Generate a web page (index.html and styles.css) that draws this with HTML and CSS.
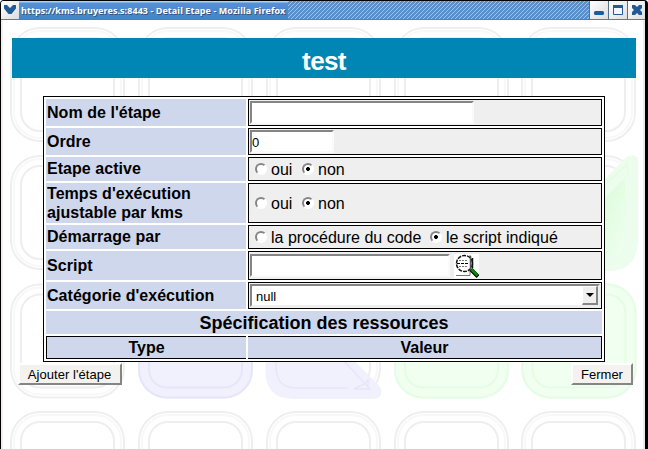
FILE: index.html
```html
<!DOCTYPE html>
<html lang="fr">
<head>
<meta charset="utf-8">
<title>Detail Etape</title>
<link rel="stylesheet" href="styles.css">
</head>
<body>
<div class="window">
  <header class="titlebar">
    <div class="wbtn menu"><svg width="14" height="10" viewBox="0 0 14 10"><path d="M1 0h3l3 3 3-3h3v3.500L8.500 9h-3L1 3.500z" fill="#215a96"/></svg></div>
    <div class="caption"><span>https://kms.bruyeres.s:8443 - Detail Etape - Mozilla Firefox</span></div>
    <div class="hatch"></div>
    <div class="wbtn"><svg width="12" height="12" viewBox="0 0 12 12"><rect x="1" y="7" width="10" height="4" rx="1.500" fill="#215a96"/></svg></div>
    <div class="wbtn"><svg width="12" height="12" viewBox="0 0 12 12"><path d="M1.500 1.500h9v9h-9z" fill="#f2f5fa" stroke="#215a96"/><path d="M1 1h10v3H1z" fill="#215a96"/></svg></div>
    <div class="wbtn"><svg width="12" height="12" viewBox="0 0 12 12"><path d="M1 1h3l2 2 2-2h3v3L9 6l2 2v3H8L6 9l-2 2H1V8l2-2-2-2z" fill="#215a96"/></svg></div>
  </header>
  <main class="page">
    <svg class="backdrop" width="641" height="429" viewBox="3 20 641 429">
      <defs>
        <linearGradient id="leaf" x1="0" y1="0" x2="1" y2="1"><stop offset="0" stop-color="#d6fad6"/><stop offset="1" stop-color="#f0fff0"/></linearGradient>
        <g id="tile" fill="none">
          <rect x="1" y="1" width="113" height="113" rx="29" stroke="#efefef" stroke-width="2"/>
          <rect x="4" y="4" width="107" height="107" rx="26" stroke="#f8f8f8" stroke-width="2"/>
          <rect x="11" y="11" width="93" height="93" rx="19" stroke="#eeeeee" stroke-width="2"/>
        </g>
        <g id="row"><use href="#tile"/><use href="#tile" x="128"/><use href="#tile" x="256"/><use href="#tile" x="384"/><use href="#tile" x="511"/></g>
        <g id="solid">
          <rect width="115" height="115" rx="29" stroke="none"/>
          <rect x="1" y="1" width="113" height="113" rx="28" fill="none"/>
          <rect x="11" y="11" width="93" height="93" rx="18" fill="none"/>
        </g>
      </defs>
      <use href="#row" x="10" y="27"/>
      <use href="#row" x="10" y="155"/>
      <use href="#row" x="10" y="283.500"/>
      <use href="#row" x="10" y="411"/>
      <g fill="#f1f1fd" stroke="#e6e6fa" stroke-width="2">
        <use href="#solid" x="138" y="283.500"/>
        <path d="M265.500 340v31q0 28 28 28h80q8-1 8-8-1-5-5-8l-43-43z" stroke="none"/>
        <path d="M276 350v20q2 17 18 18h54M344 361l26 28h-13M368 380v9h-14l10-5z" fill="none" stroke-width="1.500"/>
      </g>
      <g fill="#f0fff0" stroke="#e5fce5" stroke-width="2">
        <use href="#solid" x="394" y="283.500"/>
        <use href="#solid" x="521.500" y="283.500"/>
        <path d="M590 195l36-38q9-5 12 2v84q-2 28-30 28h-18z" stroke="none" fill="#edfded"/>
        <path d="M600 190l27-26 1 12" fill="none"/>
        <path d="M590 212l35-34v62q-2 19-20 19h-15z" fill="url(#leaf)" stroke="none"/>
      </g>
    </svg>
    <div class="content">
      <h1>test</h1>
      <form class="details">
        <div class="label">Nom de l'étape</div>
        <div class="field"><input class="name" type="text"></div>
        <div class="label">Ordre</div>
        <div class="field"><input class="order" type="text" value="0"></div>
        <div class="label raised">Etape active</div>
        <div class="field radios"><i class="radio"></i><span class="oui">oui</span><i class="radio on"></i><span>non</span></div>
        <div class="label">Temps d'exécution<br>ajustable par kms</div>
        <div class="field radios"><i class="radio"></i><span class="oui">oui</span><i class="radio on"></i><span>non</span></div>
        <div class="label raised">Démarrage par</div>
        <div class="field radios"><i class="radio"></i><span class="proc">la procédure du code</span><i class="radio on"></i><span class="indique">le script indiqué</span></div>
        <div class="label">Script</div>
        <div class="field"><input class="script" type="text"><svg class="lens" width="25" height="24" viewBox="0 0 25 24"><path fill="#fff" d="M0 0h25v24H0z"/><path d="M2 21.500h14V1" fill="none" stroke="#777"/><circle cx="10.500" cy="9.500" r="8" fill="#fff" stroke="#111" stroke-width="1.500" stroke-dasharray="4 1"/><path d="M16.500 2v14" stroke="#555" stroke-width="1.500"/><path d="M18.500 4v10" stroke="#111" stroke-width="1.500"/><path d="M5 6.500h8M5 12.500h9" stroke="#777" stroke-dasharray="2 1"/><path d="M3 9.500h12" stroke="#000" stroke-dasharray="3 1"/><path d="M17 15.500l7 7" stroke="#000" stroke-width="4"/><path d="M17.500 15.500l6 6" stroke="#078d07" stroke-width="2.600"/></svg></div>
        <div class="label">Catégorie d'exécution</div>
        <div class="field"><div class="select"><span>null</span><b class="arrow"></b></div></div>
        <div class="section"><span>Spécification des ressources</span></div>
        <div class="head type">Type</div>
        <div class="head value">Valeur</div>
      </form>
      <div class="actions"><button class="add"><span>Ajouter l'étape</span></button><button class="close"><span>Fermer</span></button></div>
    </div>
  </main>
</div>
</body>
</html>
```
FILE: styles.css
```css
* { box-sizing: border-box; }
body { margin: 0; overflow: hidden; font: 16px "Liberation Sans", sans-serif; color: #000; }
.window { width: 648px; height: 449px; border: solid #000; border-width: 1px 3px 0 1px; border-radius: 4px 4px 0 0; background: #fff; overflow: hidden; }
.titlebar { display: flex; height: 19px; margin-right: -1px; background: linear-gradient(#a9d0ff 0 1px, #5890d2 2px, #4684c8 17px); border-bottom: 1px solid #777; }
.wbtn { width: 19px; display: flex; align-items: center; justify-content: center; background: linear-gradient(135deg, #fff, #dcdcdc); border-left: 1px solid #5a6f8a; }
.wbtn.menu { width: 18px; border: 0; }
.caption { width: 269px; padding-left: 2px; font: bold 9px/19px "Open Sans", sans-serif; letter-spacing: .055px; color: #fff; text-shadow: 1px 1px #35547b; white-space: nowrap; }
.hatch { flex: 1; background: repeating-linear-gradient(135deg, #9fc2e8 0 1px, #5a8fca 1px 2.830px); }
.page { display: grid; height: 429px; width: 644px; border-left: 2px solid #f4eeee; border-right: 2px solid #eaeaea; }
.backdrop, .content { grid-area: 1 / 1; }
.content { padding: 18px 8px 0 9px; z-index: 1; }
h1 { margin: 0; width: 624px; height: 40px; background: #0086b4; color: #fff; font-size: 26px; letter-spacing: -.6px; line-height: 46px; text-align: center; }
.details { display: grid; width: 562px; margin: 18px 0 0 31px; padding: 2px; border: 1px solid #000; background: #fff; gap: 2px; grid-template-columns: 200px 354px; grid-template-rows: 27px 27px 24px 40px 24px 29px 27px 23px 23px; }
.label { display: flex; align-items: center; padding-left: 1px; background: #cfd7ec; font-weight: bold; line-height: 19px; letter-spacing: .04px; }
.raised { padding-bottom: 2px; }
.field { display: flex; align-items: center; border: 1px solid #000; padding-left: 1px; background: #efefef; min-width: 0; }
input { height: 23px; border: 2px solid; border-color: #858585 #fafafa #fafafa #858585; padding: 1px 0 0; margin: 0; background: #fff; font: 13px "Liberation Sans", sans-serif; outline: 0; }
.name { width: 224px; }
.order { width: 84px; }
.script { width: 200px; margin-right: 4px; }
.radios { padding: 1px 0 0 6px; }
.radio { width: 12px; height: 12px; margin: 0 4px 2px 0; border-radius: 50%; border: 2px solid; border-color: #858585 #fff #fff #858585; background: #fff; }
.on { background: radial-gradient(circle, #000 0 1.800px, #fff 2.200px); }
.oui { width: 31px; }
.proc { width: 159px; white-space: nowrap; }
.indique { letter-spacing: .04px; }
.select { display: flex; justify-content: space-between; width: 350px; height: 23px; border: 2px solid; border-color: #858585 #eee #eee #858585; background: #fff; font-size: 13px; line-height: 21px; padding-left: 4px; }
.arrow { width: 16px; height: 19px; background: #efefef; border: 1px solid #fff; border-right: 2px solid #858585; border-bottom: 2px solid #858585; display: grid; place-items: center; }
.arrow::before { content: ""; border: 4px solid transparent; border-top-color: #000; border-bottom: 0; }
.section { grid-column: 1 / 3; background: #cfd7ec; font-weight: bold; font-size: 18px; line-height: 25px; text-align: center; }
.head { background: #cfd7ec; border: 1px solid #000; font-weight: bold; text-align: center; line-height: 22px; }
.type { border-right: 0; }
.value { border-left: 0; }
.actions { display: flex; justify-content: space-between; width: 615px; margin: 1px 0 0 6px; }
button { height: 22px; padding: 0; border: 2px solid; border-color: #fff #858585 #858585 #fff; background: #f3f2ef; font: 13px "Liberation Sans", sans-serif; color: #000; }
.add { width: 104px; padding-right: 1px; letter-spacing: .05px; }
.close { width: 62px; }
```
